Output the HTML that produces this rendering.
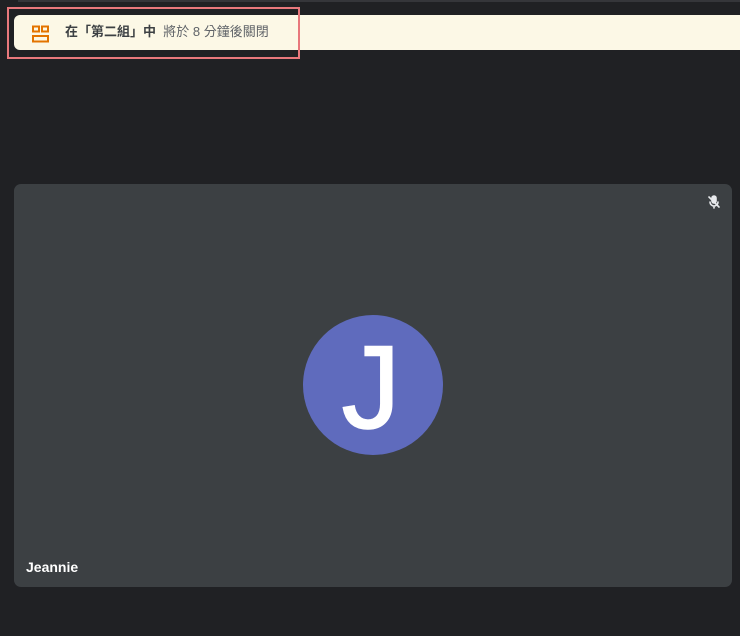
<!DOCTYPE html>
<html><head><meta charset="utf-8"><style>
html,body{margin:0;padding:0;background:#202124;width:740px;height:636px;overflow:hidden;position:relative;font-family:"Liberation Sans","Noto Sans CJK TC",sans-serif}
.topline{position:absolute;left:18px;top:0;width:722px;height:2px;background:#35363a}
.banner{position:absolute;left:14px;top:15px;width:740px;height:35px;background:#fcf8e6;border-radius:6px}
.outline{position:absolute;left:7px;top:7px;width:293px;height:52px;border:2px solid #e8787c;box-sizing:border-box}
.txt{position:absolute;left:65px;top:24px;font-size:13px;color:#3c4043;line-height:16px;white-space:nowrap}
.txt b{font-weight:bold;color:#3c4043}
.txt span{color:#5f6368}
.tile{position:absolute;left:14px;top:184px;width:718px;height:403px;background:#3c4043;border-radius:7px}
.av{position:absolute;left:303px;top:315px;width:140px;height:140px;border-radius:50%;background:#5f6bbd}
.J{position:absolute;left:-2px;top:13px;width:140px;text-align:center;font-family:"Liberation Sans",sans-serif;color:#fff;font-size:118px;line-height:120px;-webkit-text-stroke:1.5px #fff}
.name{position:absolute;left:26px;top:559px;color:#fff;font-size:14px;font-weight:bold;font-family:"Liberation Sans",sans-serif}
</style></head><body>
<div class="topline"></div>
<div class="banner"></div>
<svg style="position:absolute;left:30px;top:24px" width="20" height="20" viewBox="0 0 20 20">
<g fill="none" stroke="#e37400" stroke-width="2">
<rect x="3" y="2.5" width="6" height="5"/><rect x="12" y="2.5" width="6" height="5"/><rect x="3" y="12" width="15" height="5.5"/></g></svg>
<div class="txt"><b>在「第二組」中</b>&nbsp; <span>將於 8 分鐘後關閉</span></div>
<div class="outline"></div>
<div class="tile"></div>
<svg style="position:absolute;left:705px;top:193px" width="18" height="18" viewBox="0 0 18 18">
<g fill="none" stroke="#e8eaed" stroke-width="1.6" stroke-linecap="round">
<rect x="7" y="3" width="4" height="7" rx="2" fill="#e8eaed"/><path d="M5 9a4 4 0 0 0 8 0M9 13v2"/><path d="M4 4l10 10"/></g></svg>
<div class="av"><div class="J">J</div></div>
<div class="name">Jeannie</div>
</body></html>
